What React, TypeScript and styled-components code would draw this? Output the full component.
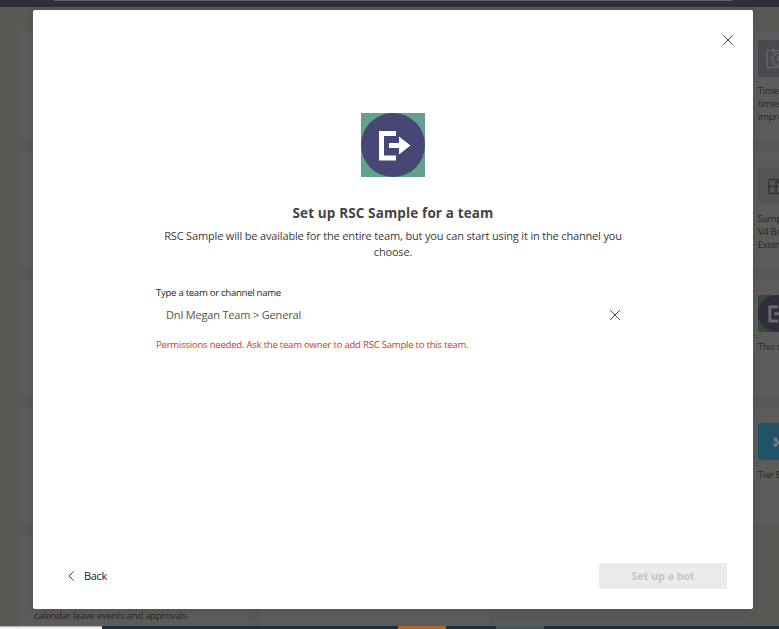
import React from "react";
import styled, { createGlobalStyle } from "styled-components";

const Global = createGlobalStyle`
  *, *::before, *::after { box-sizing: border-box; }
  body { margin: 0; overflow: hidden; font-family: "Open Sans", "Noto Sans", sans-serif; }
  h1, p { margin: 0; }
  button { font: inherit; border: 0; padding: 0; background: none; }
`;

const Page = styled.div`
  position: relative;
  display: flex;
  flex-direction: column;
  width: 779px;
  height: 629px;
  overflow: hidden;
  background: #595855;
`;

const TopBar = styled.header`
  flex: none;
  height: 7px;
  padding: 0 47px 0 54px;
  background: #302e3b;
`;

const SearchEdge = styled.div`
  height: 1px;
  background: #62606a;
`;

const Catalog = styled.main`
  flex: 1;
  min-height: 0;
  overflow: hidden;
  padding: 24px 0 0 19px;
  display: grid;
  grid-template-columns: repeat(4, 229px);
  grid-template-rows: 108px repeat(4, 115px);
  gap: 13px 12.25px;
`;

const Card = styled.article<{ $first?: boolean }>`
  display: flex;
  flex-direction: column;
  gap: ${(p) => (p.$first ? "7px" : "8px")};
  padding: ${(p) => (p.$first ? "9px" : "15px")} 15px 9px;
  border-radius: 3px;
  background: #5d5c5a;
`;

const CardIcon = styled.div<{ $bg: string }>`
  flex: none;
  width: 37px;
  height: 37px;
  border-radius: 3px;
  overflow: hidden;
  background: ${(p) => p.$bg};
  svg { display: block; }
`;

const CardText = styled.p<{ $bottom?: boolean }>`
  font-size: 9.6px;
  line-height: 13px;
  white-space: pre;
  color: #282725;
  letter-spacing: -0.28px;
  margin-top: ${(p) => (p.$bottom ? "58px" : "0")};
`;

const TaskBar = styled.footer`
  flex: none;
  display: flex;
  height: 3px;
  background: #1d2f35;
`;

const TaskSegment = styled.div<{ $w: number; $bg?: string }>`
  width: ${(p) => p.$w}px;
  background: ${(p) => p.$bg ?? "transparent"};
`;

const StatusStrip = styled(TaskSegment)`
  border-top: 1px solid #b4b4b4;
`;

const Dialog = styled.section`
  position: absolute;
  left: 33px;
  top: 10px;
  width: 720px;
  height: 599px;
  display: flex;
  flex-direction: column;
  border-radius: 2px;
  background: #fff;
  box-shadow: 0 2px 8px rgba(0, 0, 0, 0.12);
`;

const DialogHeader = styled.div`
  display: flex;
  justify-content: flex-end;
  height: 103px;
  padding: 24px 19px 0 0;
`;

const IconButton = styled.button`
  display: flex;
  width: 12px;
  height: 12px;
`;

const DialogBody = styled.div`
  flex: 1;
  display: flex;
  flex-direction: column;
  align-items: center;
`;

const Title = styled.h1`
  margin-top: 26px;
  font-size: 13.5px;
  line-height: 20px;
  font-weight: 700;
  letter-spacing: 0.13px;
  color: #444342;
`;

const Description = styled.p`
  margin-top: 5px;
  font-size: 11px;
  line-height: 16px;
  letter-spacing: -0.165px;
  text-align: center;
  color: #3b3a39;
`;

const Form = styled.div`
  width: 474px;
  margin-top: 25px;
  display: flex;
  flex-direction: column;
`;

const Label = styled.label`
  font-size: 9.6px;
  line-height: 16px;
  letter-spacing: -0.29px;
  color: #252423;
`;

const Field = styled.div`
  display: flex;
  align-items: center;
  justify-content: space-between;
  height: 28px;
  padding: 0 9px 0 10px;
`;

const Value = styled.span`
  font-size: 11px;
  line-height: 16px;
  letter-spacing: -0.17px;
  color: #55534f;
`;

const ErrorText = styled.p`
  margin-top: 8px;
  font-size: 9.6px;
  line-height: 16px;
  letter-spacing: -0.25px;
  color: #cc3a24;
`;

const DialogFooter = styled.div`
  display: flex;
  align-items: center;
  justify-content: space-between;
  padding: 0 26px 20px 34px;
`;

const BackButton = styled.button`
  display: flex;
  align-items: center;
  gap: 9px;
  font-size: 11px;
  line-height: 16px;
  letter-spacing: -0.3px;
  color: #252423;
`;

const PrimaryButton = styled.button`
  width: 128px;
  height: 26px;
  padding-bottom: 1px;
  border-radius: 2px;
  background: #edebe9;
  font-size: 11px;
  font-weight: 700;
  letter-spacing: -0.2px;
  color: #c8c6c4;
`;

const Cross = ({ size = 12 }: { size?: number }) => (
  <svg width={size} height={size} viewBox="0 0 12 12" stroke="#484644" strokeWidth="1" fill="none">
    <path d="M1.2 1.2 10.8 10.8M10.8 1.2 1.2 10.8" />
  </svg>
);

const ExitLogo = ({ size, square, disc, ink }: { size: number; square: string; disc: string; ink: string }) => (
  <svg width={size} height={size} viewBox="0 0 64 64">
    <rect width="64" height="64" fill={square} />
    <circle cx="32" cy="32" r="32" fill={disc} />
    <path d="M18 18H35V23H23V42.5H35V47.5H18Z" fill={ink} />
    <path d="M28 30H38V23.5L49.5 32.5L38 41.5V35H28Z" fill={ink} />
  </svg>
);

const ClockIcon = () => (
  <svg width="37" height="37" viewBox="0 0 37 37" fill="none" stroke="#65636a" strokeWidth="1.5">
    <rect x="9" y="10.5" width="20" height="17" rx="2" />
    <path d="M15.5 7v6M13 10.5h5" />
    <circle cx="20" cy="19.5" r="6" />
    <path d="M20 16v4h3" />
  </svg>
);

const BlocksIcon = () => (
  <svg width="37" height="37" viewBox="0 0 37 37" fill="none" stroke="#343331" strokeWidth="1.5">
    <path d="M18 12.5h-5.5a1.5 1.5 0 0 0-1.5 1.5v11a1.5 1.5 0 0 0 1.5 1.5H24V19.500H11M18 12.500v14" />
    <path d="m23 10 4 4-4 4-4-4z" />
  </svg>
);

const ToolIcon = () => (
  <svg width="37" height="37" viewBox="0 0 37 37" fill="none" stroke="#777977" strokeWidth="2">
    <path d="m18 17 7 7M25 15l-7 7" />
    <circle cx="17.500" cy="16.500" r="1" />
    <circle cx="17.500" cy="22" r="1" />
  </svg>
);

type App = { icon: React.ReactNode; bg: string; text: string };

const apps: App[] = [
  { icon: <ClockIcon />, bg: "#4b4950", text: "Time\ntimes\nimpro" },
  { icon: <BlocksIcon />, bg: "#565555", text: "Samp\nV4 Bo\nExten" },
  {
    icon: <ExitLogo size={37} square="#34493f" disc="#302e3b" ink="#6b6a6c" />,
    bg: "#34493f",
    text: "This s",
  },
  { icon: <ToolIcon />, bg: "#205368", text: "Tier B" },
];

export default function App() {
  return (
    <>
      <Global />
      <Page>
        <TopBar>
          <SearchEdge />
        </TopBar>
        <Catalog>
          {apps.map((app, row) => (
            <React.Fragment key={app.text}>
              <Card />
              <Card />
              <Card />
              <Card $first={row === 0}>
                <CardIcon $bg={app.bg}>{app.icon}</CardIcon>
                <CardText>{app.text}</CardText>
              </Card>
            </React.Fragment>
          ))}
          <Card>
            <CardText $bottom>calendar leave events and approvals.</CardText>
          </Card>
          <Card />
        </Catalog>
        <TaskBar>
          <StatusStrip $w={102} $bg="#f0f0f0" />
          <TaskSegment $w={296} />
          <TaskSegment $w={48} $bg="#ad6829" />
          <TaskSegment $w={50} />
          <TaskSegment $w={48} $bg="#475557" />
        </TaskBar>

        <Dialog role="dialog" aria-modal="true">
          <DialogHeader>
            <IconButton aria-label="Close">
              <Cross />
            </IconButton>
          </DialogHeader>
          <DialogBody>
            <ExitLogo size={64} square="#62a28d" disc="#464775" ink="#ffffff" />
            <Title>Set up RSC Sample for a team</Title>
            <Description>
              RSC Sample will be available for the entire team, but you can start using it in the channel you
              <br />
              choose.
            </Description>
            <Form>
              <Label>Type a team or channel name</Label>
              <Field>
                <Value>Dnl Megan Team &gt; General</Value>
                <IconButton aria-label="Clear">
                  <Cross />
                </IconButton>
              </Field>
              <ErrorText>Permissions needed. Ask the team owner to add RSC Sample to this team.</ErrorText>
            </Form>
          </DialogBody>
          <DialogFooter>
            <BackButton>
              <svg width="8" height="12" viewBox="0 0 8 12" fill="none" stroke="#484644">
                <path d="M6.500 1.500 2 6l4.500 4.500" />
              </svg>
              Back
            </BackButton>
            <PrimaryButton disabled>Set up a bot</PrimaryButton>
          </DialogFooter>
        </Dialog>
      </Page>
    </>
  );
}
